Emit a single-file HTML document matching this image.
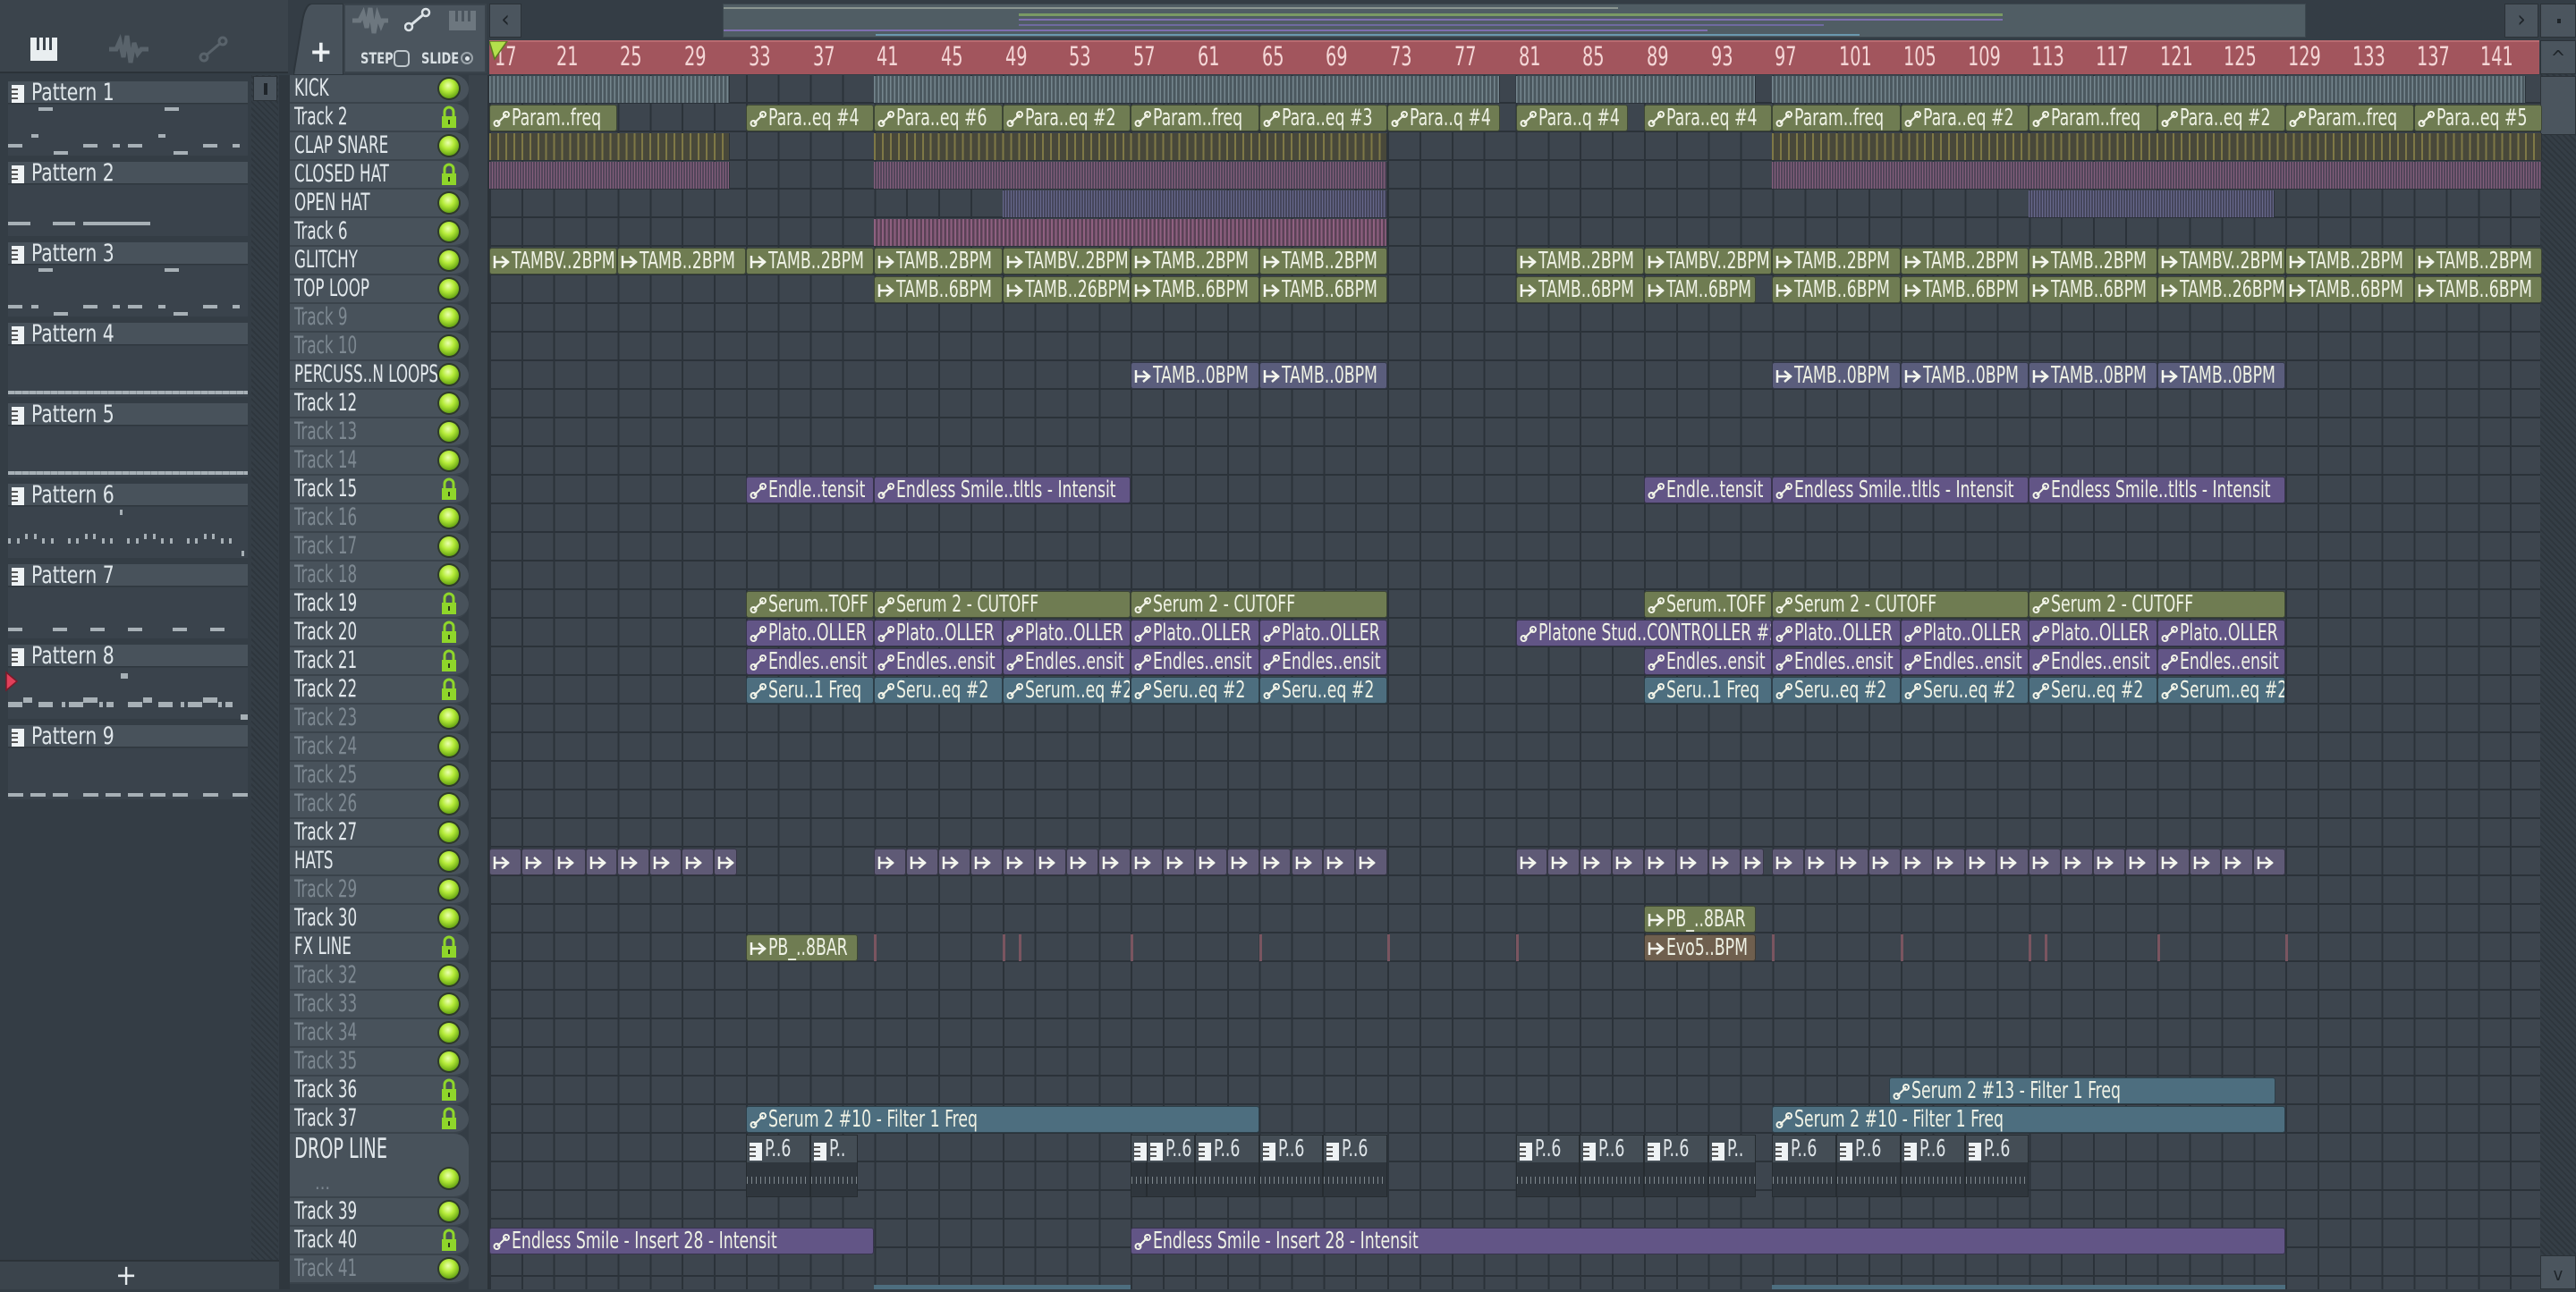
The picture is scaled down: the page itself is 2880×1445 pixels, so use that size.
<!DOCTYPE html>
<html><head><meta charset="utf-8">
<style>
*{margin:0;padding:0;box-sizing:border-box}
body{width:2880px;height:1442px;overflow:hidden;background:#343d45;font-family:"Liberation Sans Narrow","DejaVu Sans Condensed","Liberation Sans",sans-serif;position:relative}
.a{position:absolute}
.s{display:inline-block;transform:scaleX(.74);transform-origin:0 50%;white-space:nowrap}
.tn .s{transform:scaleX(.69)}
.pat .s{transform:scaleX(.84)}
.tn{position:absolute;left:324px;width:200px;background:#48525b;border-bottom:2px solid #3a434b;border-radius:0 16px 16px 0;color:#e2e8ec;font-size:27px;padding-left:5px;white-space:nowrap;overflow:hidden}
.tn.d{color:#7d8891}
.lt{position:absolute;left:491px;width:22px;height:22px;border-radius:50%;background:radial-gradient(circle at 45% 35%,#eaffb0 0,#b6ec3a 35%,#5f9e0e 80%);box-shadow:0 0 0 2px #2e3a2a}
.clip{position:absolute;height:30px;border:1px solid rgba(20,25,30,.55);border-radius:3px;overflow:hidden;white-space:nowrap;color:#eef1e4;font-size:26px;line-height:28px;padding-left:24px}
.clip svg{position:absolute;left:3px;top:6px}
.g{background:#6f7c52}
.p{background:#625586}
.t{background:#4d6e7f}
.pg{background:#5a5d7c}
.h{background:#5f5a76}
.pat{position:absolute;left:9px;width:268px;height:25px;background:#48525b;color:#dfe6ea;font-size:27px;line-height:25px;padding-left:26px;border-bottom:1px solid #2f373e;overflow:hidden}
.pv{position:absolute;left:9px;width:268px;height:57px;background:#3a434c}
.n{position:absolute;height:4px;background:#a7b0b6}
.rn{position:absolute;top:46px;color:#f4d6d6;font-size:29px}
</style></head><body>
<div class="a" style="left:0;top:0;width:322px;height:82px;background:#3b444c;border-bottom:2px solid #2b3238"></div>
<svg class="a" style="left:34px;top:42px" width="30" height="26"><rect x="0" y="0" width="30" height="26" fill="#e9eef0"/><rect x="7" y="0" width="3" height="14" fill="#3b444c"/><rect x="14" y="0" width="3" height="14" fill="#3b444c"/><rect x="21" y="0" width="3" height="14" fill="#3b444c"/></svg>
<svg class="a" style="left:122px;top:38px" width="44" height="34"><path d="M0 17 L8 17 L12 8 L16 26 L20 2 L24 32 L28 10 L32 22 L36 17 L44 17" stroke="#59636b" stroke-width="5" fill="none"/></svg>
<svg class="a" style="left:222px;top:40px" width="34" height="30"><line x1="6" y1="24" x2="27" y2="6" stroke="#59636b" stroke-width="3"/><circle cx="6" cy="24" r="4" fill="#3b444c" stroke="#59636b" stroke-width="3"/><circle cx="27" cy="6" r="4" fill="#3b444c" stroke="#59636b" stroke-width="3"/></svg>
<div class="a" style="left:0;top:84px;width:312px;height:1325px;background:#343d45"></div>
<div class="a" style="left:281px;top:84px;width:30px;height:1325px;background:repeating-linear-gradient(45deg,#2e363d 0 2px,#353e46 2px 5px)"></div>
<div class="a" style="left:283px;top:85px;width:27px;height:28px;background:#4b555e;border:1px solid #2b3238"><div class="a" style="left:11px;top:7px;width:4px;height:13px;background:#1f252a"></div></div>
<div class="a" style="left:312px;top:84px;width:12px;height:1358px;background:#2f373e"></div>
<div class="a" style="left:0;top:1409px;width:312px;height:33px;background:#3b444c;border-top:2px solid #2b3238;color:#e6ebee;font-size:32px;line-height:30px;text-align:center;padding-right:30px">+</div>
<div id="pats"></div>
<div class="a" style="left:322px;top:0;width:225px;height:84px;background:#343d45"></div>
<svg class="a" style="left:328px;top:4px" width="56" height="80"><path d="M20 0 H56 V80 H0 L10 20 Q13 2 20 0Z" fill="#48525b" stroke="#2d353c" stroke-width="2"/></svg>
<div class="a" style="left:346px;top:38px;color:#eef2f4;font-size:34px;font-weight:bold">+</div>
<div class="a" style="left:384px;top:4px;width:160px;height:78px;background:#4b555e;border:2px solid #3a434b"></div>
<svg class="a" style="left:394px;top:8px" width="40" height="30"><path d="M0 15 L8 15 L12 7 L16 23 L20 1 L24 29 L28 9 L32 20 L34 15 L40 15" stroke="#6d777f" stroke-width="5" fill="none"/></svg>
<svg class="a" style="left:452px;top:8px" width="30" height="28"><line x1="5" y1="22" x2="24" y2="6" stroke="#dbe2e6" stroke-width="3"/><circle cx="5" cy="22" r="4" fill="#4b555e" stroke="#dbe2e6" stroke-width="2.5"/><circle cx="24" cy="6" r="4" fill="#4b555e" stroke="#dbe2e6" stroke-width="2.5"/></svg>
<svg class="a" style="left:502px;top:12px" width="30" height="22"><rect width="30" height="22" fill="#6d777f"/><rect x="7" width="3" height="12" fill="#4b555e"/><rect x="14" width="3" height="12" fill="#4b555e"/><rect x="21" width="3" height="12" fill="#4b555e"/></svg>
<div class="a" style="left:403px;top:56px;color:#d8dfe3;font-size:17px;font-weight:bold"><span class="s" style="transform:scaleX(.85)">STEP</span></div>
<div class="a" style="left:440px;top:56px;width:18px;height:19px;border:2px solid #c0c8cd;border-radius:5px"></div>
<div class="a" style="left:471px;top:56px;color:#d8dfe3;font-size:17px;font-weight:bold"><span class="s" style="transform:scaleX(.85)">SLIDE</span></div>
<div class="a" style="left:515px;top:58px;width:14px;height:14px;border:2px solid #9aa3a9;border-radius:50%"><div class="a" style="left:3px;top:3px;width:5px;height:5px;border-radius:50%;background:#e0e6ea"></div></div>
<div class="a" style="left:547px;top:0;width:2333px;height:45px;background:#343d45"></div>
<div class="a" style="left:547px;top:4px;width:36px;height:38px;background:#4b555e;border:1px solid #2b3238;color:#1e2429;font-size:26px;text-align:center;line-height:34px">&lsaquo;</div>
<div class="a" style="left:808px;top:4px;width:1770px;height:38px;background:#505d64;border:1px solid #3d484f">
 <div class="a" style="left:0;top:3px;width:1000px;height:2px;background:#8a9590"></div>
 <div class="a" style="left:330px;top:10px;width:1100px;height:3px;background:#7a9a64"></div>
 <div class="a" style="left:330px;top:16px;width:1100px;height:2px;background:#7e6fb0"></div>
 <div class="a" style="left:330px;top:22px;width:900px;height:2px;background:#6e6aa0"></div>
 <div class="a" style="left:0;top:28px;width:1100px;height:2px;background:#7e6fb0"></div>
 <div class="a" style="left:170px;top:33px;width:1100px;height:2px;background:#6a98ae"></div>
</div>
<div class="a" style="left:2800px;top:4px;width:38px;height:38px;background:#4b555e;border:1px solid #2b3238;color:#1e2429;font-size:26px;text-align:center;line-height:34px">&rsaquo;</div>
<div class="a" style="left:2840px;top:4px;width:40px;height:38px;background:#4b555e;border:1px solid #2b3238"><div class="a" style="left:18px;top:16px;width:4px;height:5px;background:#1e2429"></div></div>
<div class="a" style="left:547px;top:45px;width:2292px;height:38px;background:#a2555d;border-top:2px solid #b86a70"></div>
<div id="rul"></div>
<svg class="a" style="left:547px;top:46px" width="22" height="22"><path d="M0 0 H20 L6 20 Z" fill="#b4e04c" stroke="#5a7a20" stroke-width="1.5"/></svg>
<div class="a" style="left:2840px;top:45px;width:40px;height:1397px;background:repeating-linear-gradient(45deg,#2e363d 0 2px,#353e46 2px 5px)"></div>
<div class="a" style="left:2840px;top:45px;width:40px;height:38px;background:#4b555e;border:1px solid #2b3238;color:#1e2429;font-size:22px;text-align:center;line-height:40px">^</div>
<div class="a" style="left:2840px;top:85px;width:40px;height:66px;background:#4b555e;border:1px solid #2b3238"></div>
<div class="a" style="left:2840px;top:1404px;width:40px;height:38px;background:#4b555e;border:1px solid #2b3238;color:#1e2429;font-size:20px;text-align:center;line-height:40px">v</div>
<div class="a" style="left:524px;top:84px;width:23px;height:1358px;background:#3a434b;border-right:2px solid #2b3238"></div>
<div class="a" style="left:547px;top:84px;width:2293px;height:1358px;background-color:#3d454e;background-image:repeating-linear-gradient(90deg,#2b3239 0 2px,transparent 2px 35.86px),repeating-linear-gradient(180deg,transparent 0 30px,#2b3239 30px 32px)"></div>
<div id="tr"></div>
<div id="cl"></div>
<script>
var GX=547,BW=17.93;function X(b){return GX+(b-17)*BW}
function S(t){return '<span class="s">'+t+'</span>'}
function top_(i){return i<37?84+32*i:(i==37?1268:1340+32*(i-38))}
var R=document.getElementById('rul'),h='';
for(var b=17;b<=141;b+=4)h+='<div class="rn" style="left:'+(X(b)+(b==17?6:3))+'px">'+S(b)+'</div>';R.innerHTML=h;
var names=["KICK","Track 2","CLAP SNARE","CLOSED HAT","OPEN HAT","Track 6","GLITCHY","TOP LOOP","Track 9","Track 10","PERCUSS..N LOOPS","Track 12","Track 13","Track 14","Track 15","Track 16","Track 17","Track 18","Track 19","Track 20","Track 21","Track 22","Track 23","Track 24","Track 25","Track 26","Track 27","HATS","Track 29","Track 30","FX LINE","Track 32","Track 33","Track 34","Track 35","Track 36","Track 37","DROP LINE","Track 39","Track 40","Track 41"];
var dim=[9,10,13,14,16,17,18,23,24,25,26,29,32,33,34,35,41],lock=[2,4,15,19,20,21,22,31,36,37,40];
var lockSvg='<svg width="18" height="26"><path d="M4 12 V7 a5 5 0 0 1 10 0 V12" stroke="#8fd62a" stroke-width="3" fill="none"/><rect x="1" y="12" width="16" height="13" fill="#8fd62a"/><rect x="8" y="16" width="2" height="5" fill="#2a3a18"/></svg>';
h='';
for(var i=0;i<41;i++){var n=i+1,t=top_(i),ht=(i==37?72:32);
h+='<div class="tn'+(dim.indexOf(n)>=0?' d':'')+'" style="top:'+t+'px;height:'+ht+'px;line-height:30px;'+(i==37?'font-size:31px;line-height:34px;':'')+'">'+S(names[i])+(i==37?'<div style="position:absolute;left:28px;top:38px;color:#7d8891;font-size:20px">...</div>':'')+'</div>';
var cy=(i==37?t+50:t+15);
if(lock.indexOf(n)>=0)h+='<div class="a" style="left:493px;top:'+(cy-13)+'px">'+lockSvg+'</div>';
else h+='<div class="lt" style="top:'+(cy-11)+'px"></div>';}
document.getElementById('tr').innerHTML=h;
var au='<svg width="20" height="18"><line x1="5" y1="14" x2="15" y2="4" stroke="#f2f4e8" stroke-width="2"/><circle cx="4.5" cy="14" r="3" fill="none" stroke="#f2f4e8" stroke-width="2"/><circle cx="15" cy="4" r="3" fill="none" stroke="#f2f4e8" stroke-width="2"/></svg>';
var ad='<svg width="20" height="18"><path d="M2 2 L2 16 M2 9 H18 M10 3 L17 9 L10 15" stroke="#f4f6ee" stroke-width="2.5" fill="none"/></svg>';
var pt='<svg width="16" height="20"><rect width="14" height="20" fill="#eef2f4"/><rect x="0" y="4" width="7" height="2" fill="#555"/><rect x="0" y="9" width="7" height="2" fill="#555"/><rect x="0" y="14" width="7" height="2" fill="#555"/></svg>';
var C='';
function clip(row,a,b,txt,cls,ic){var t=top_(row);C+='<div class="clip '+cls+'" style="left:'+X(a)+'px;top:'+(t+1)+'px;width:'+(X(b)-X(a))+'px">'+(ic||'')+S(txt)+'</div>';}
function stripe(row,a,b,bg,ln,step,w){var t=top_(row);C+='<div class="a" style="left:'+X(a)+'px;top:'+(t+1)+'px;width:'+(X(b)-X(a))+'px;height:30px;background:'+bg+' repeating-linear-gradient(90deg,'+ln+' 0 '+w+'px,transparent '+w+'px '+step+'px);border-right:1px solid #2b3239"></div>';}
[[17,32],[41,80],[81,96],[97,144]].forEach(function(s){stripe(0,s[0],s[1],'#4b585f','#75868e',4.5,1.5)});
[[17,32],[41,73],[97,145]].forEach(function(s){stripe(2,s[0],s[1],'#48483a','#7e7846',8.96,2);stripe(3,s[0],s[1],'#52455a','#845f7c',3,1.2)});
stripe(4,49,73,'#45465c','#67688c',3,1.2);stripe(4,113,128.3,'#45465c','#67688c',3,1.2);
stripe(5,41,73,'#5a4256','#8f6080',4.5,1.8);
var t2=[[17,25,"Param..freq"],[33,41,"Para..eq #4"],[41,49,"Para..eq #6"],[49,57,"Para..eq #2"],[57,65,"Param..freq"],[65,73,"Para..eq #3"],[73,80,"Para..q #4"],[81,88,"Para..q #4"],[89,97,"Para..eq #4"],[97,105,"Param..freq"],[105,113,"Para..eq #2"],[113,121,"Param..freq"],[121,129,"Para..eq #2"],[129,137,"Param..freq"],[137,145,"Para..eq #5"]];
t2.forEach(function(c){clip(1,c[0],c[1],c[2],'g',au)});
var gl={17:"TAMBV..2BPM",25:"TAMB..2BPM",33:"TAMB..2BPM",41:"TAMB..2BPM",49:"TAMBV..2BPM",57:"TAMB..2BPM",65:"TAMB..2BPM",81:"TAMB..2BPM",89:"TAMBV..2BPM",97:"TAMB..2BPM",105:"TAMB..2BPM",113:"TAMB..2BPM",121:"TAMBV..2BPM",129:"TAMB..2BPM",137:"TAMB..2BPM"};
for(var k in gl)clip(6,+k,+k+8,gl[k],'g',ad);
var tl={41:"TAMB..6BPM",49:"TAMB..26BPM",57:"TAMB..6BPM",65:"TAMB..6BPM",81:"TAMB..6BPM",97:"TAMB..6BPM",105:"TAMB..6BPM",113:"TAMB..6BPM",121:"TAMB..26BPM",129:"TAMB..6BPM",137:"TAMB..6BPM"};
for(var k in tl)clip(7,+k,+k+8,tl[k],'g',ad);clip(7,89,96,"TAM..6BPM",'g',ad);
[57,65,97,105,113,121].forEach(function(b){clip(10,b,b+8,"TAMB..0BPM",'pg',ad)});
clip(14,33,41,"Endle..tensit",'p',au);clip(14,41,57,"Endless Smile..tltls - Intensit",'p',au);
clip(14,89,97,"Endle..tensit",'p',au);clip(14,97,113,"Endless Smile..tltls - Intensit",'p',au);clip(14,113,129,"Endless Smile..tltls - Intensit",'p',au);
clip(18,33,41,"Serum..TOFF",'g',au);clip(18,41,57,"Serum 2 - CUTOFF",'g',au);clip(18,57,73,"Serum 2 - CUTOFF",'g',au);
clip(18,89,97,"Serum..TOFF",'g',au);clip(18,97,113,"Serum 2 - CUTOFF",'g',au);clip(18,113,129,"Serum 2 - CUTOFF",'g',au);
[33,41,49,57,65,97,105,113,121].forEach(function(b){clip(19,b,b+8,"Plato..OLLER",'p',au)});clip(19,81,97,"Platone Stud..CONTROLLER #2",'p',au);
[33,41,49,57,65,89,97,105,113,121].forEach(function(b){clip(20,b,b+8,"Endles..ensit",'p',au)});
var s22={33:"Seru..1 Freq",41:"Seru..eq #2",49:"Serum..eq #2",57:"Seru..eq #2",65:"Seru..eq #2",89:"Seru..1 Freq",97:"Seru..eq #2",105:"Seru..eq #2",113:"Seru..eq #2",121:"Serum..eq #2"};
for(var k in s22)clip(21,+k,+k+8,s22[k],'t',au);
[[17,32],[41,73],[81,96],[97,129]].forEach(function(s){for(var b=s[0];b<s[1];b+=2)clip(27,b,Math.min(b+2,s[1]),"",'h',ad)});
clip(29,89,96,"PB_..8BAR",'g',ad);
clip(30,33,40,"PB_..8BAR",'g',ad);
C+='<div class="clip" style="left:'+X(89)+'px;top:1045px;width:'+(X(96)-X(89))+'px;background:#6f5f4e">'+ad+S("Evo5..BPM")+'</div>';
[41,49,50,57,65,73,81,97,105,113,114,121,129].forEach(function(b){C+='<div class="a" style="left:'+X(b)+'px;top:1045px;width:3px;height:30px;background:#7a5560"></div>'});
clip(35,104.3,128.4,"Serum 2 #13 - Filter 1 Freq",'t',au);
clip(36,33,65,"Serum 2 #10 - Filter 1 Freq",'t',au);clip(36,97,129,"Serum 2 #10 - Filter 1 Freq",'t',au);
function dp(a,b,txt){C+='<div class="a" style="left:'+X(a)+'px;top:1269px;width:'+(X(b)-X(a))+'px;height:70px;background:#2f363d;border:1px solid #262c31"><div class="a" style="left:0;top:0;width:100%;height:30px;background:#444d55;color:#dfe5e9;font-size:26px;line-height:30px;padding-left:20px;overflow:hidden;white-space:nowrap"><div class="a" style="left:3px;top:5px">'+pt+'</div>'+S(txt)+'</div><div class="a" style="left:0;top:46px;width:100%;height:8px;background:repeating-linear-gradient(90deg,#7d868c 0 1px,transparent 1px 5px)"></div></div>';}
dp(33,37,"P..6");dp(37,40,"P..");dp(57,58,"");
for(var b=57;b<73;b+=4)dp(b==57?58:b,b+4,"P..6");
for(var b=81;b<96;b+=4)dp(b,Math.min(b+4,96),b==93?"P..":"P..6");
for(var b=97;b<113;b+=4)dp(b,b+4,"P..6");
clip(39,17,41,"Endless Smile - Insert 28 - Intensit",'p',au);clip(39,57,129,"Endless Smile - Insert 28 - Intensit",'p',au);
[[41,57],[97,129]].forEach(function(s){C+='<div class="a" style="left:'+X(s[0])+'px;top:1437px;width:'+(X(s[1])-X(s[0]))+'px;height:5px;background:#4d6e7f"></div>'});
document.getElementById('cl').innerHTML=C;
var P='';
for(var i=0;i<9;i++){var t=91+90*i;
P+='<div class="pat" style="top:'+t+'px"><div class="a" style="left:4px;top:3px">'+pt+'</div>'+S('Pattern '+(i+1))+'</div><div class="pv" style="top:'+(t+26)+'px">';
if(i==0){[[34,3,16],[175,3,16],[26,33,8],[168,33,8],[0,44,16],[84,44,16],[117,44,8],[134,44,16],[218,44,16],[251,44,8],[51,52,16],[185,52,16]].forEach(function(q){P+='<div class="n" style="left:'+q[0]+'px;top:'+q[1]+'px;width:'+q[2]+'px"></div>'})}
else if(i==1){[[0,25],[50,25],[84,75]].forEach(function(q){P+='<div class="n" style="left:'+q[0]+'px;top:41px;width:'+q[1]+'px"></div>'})}
else if(i==2){[[34,3,16],[175,3,16],[0,44,16],[26,44,8],[84,44,16],[117,44,8],[134,44,16],[168,44,8],[218,44,16],[251,44,8],[51,52,16],[185,52,16]].forEach(function(q){P+='<div class="n" style="left:'+q[0]+'px;top:'+q[1]+'px;width:'+q[2]+'px"></div>'})}
else if(i==3||i==4){P+='<div class="n" style="left:0;top:50px;width:268px;background:repeating-linear-gradient(90deg,#a7b0b6 0 7px,#8a949a 7px 8px)"></div>'}
else if(i==5){for(var j=0;j<28;j++){var xx=j*9.5;if(j%7==6)continue;P+='<div class="n" style="left:'+xx+'px;top:'+(j%7==2||j%7==3?30:35)+'px;width:3px;height:6px"></div>'}P+='<div class="n" style="left:125px;top:3px;width:3px;height:6px"></div><div class="n" style="left:261px;top:49px;width:3px;height:6px"></div>'}
else if(i==6){[0,50,92,134,184,226].forEach(function(x){P+='<div class="n" style="left:'+x+'px;top:45px;width:16px"></div>'})}
else if(i==7){[[0,38,16],[17,33,10],[34,38,16],[60,38,4],[68,38,16],[84,33,16],[102,38,4],[110,38,8],[134,38,16],[151,33,10],[168,38,16],[193,38,4],[201,38,16],[218,33,16],[235,38,4],[243,38,8],[126,6,8],[260,52,8]].forEach(function(q){P+='<div class="n" style="left:'+q[0]+'px;top:'+q[1]+'px;width:'+q[2]+'px;height:6px"></div>'})}
else if(i==8){[0,25,50,84,109,134,159,184,218,251].forEach(function(x){P+='<div class="n" style="left:'+x+'px;top:50px;width:17px"></div>'})}
P+='</div>';}
P+='<svg class="a" style="left:5px;top:750px" width="16" height="24"><path d="M2 2 L14 12 L2 22Z" fill="#e2405a" stroke="#7a1a2a" stroke-width="1.5"/></svg>';
document.getElementById('pats').innerHTML=P;
</script>
</body></html>
